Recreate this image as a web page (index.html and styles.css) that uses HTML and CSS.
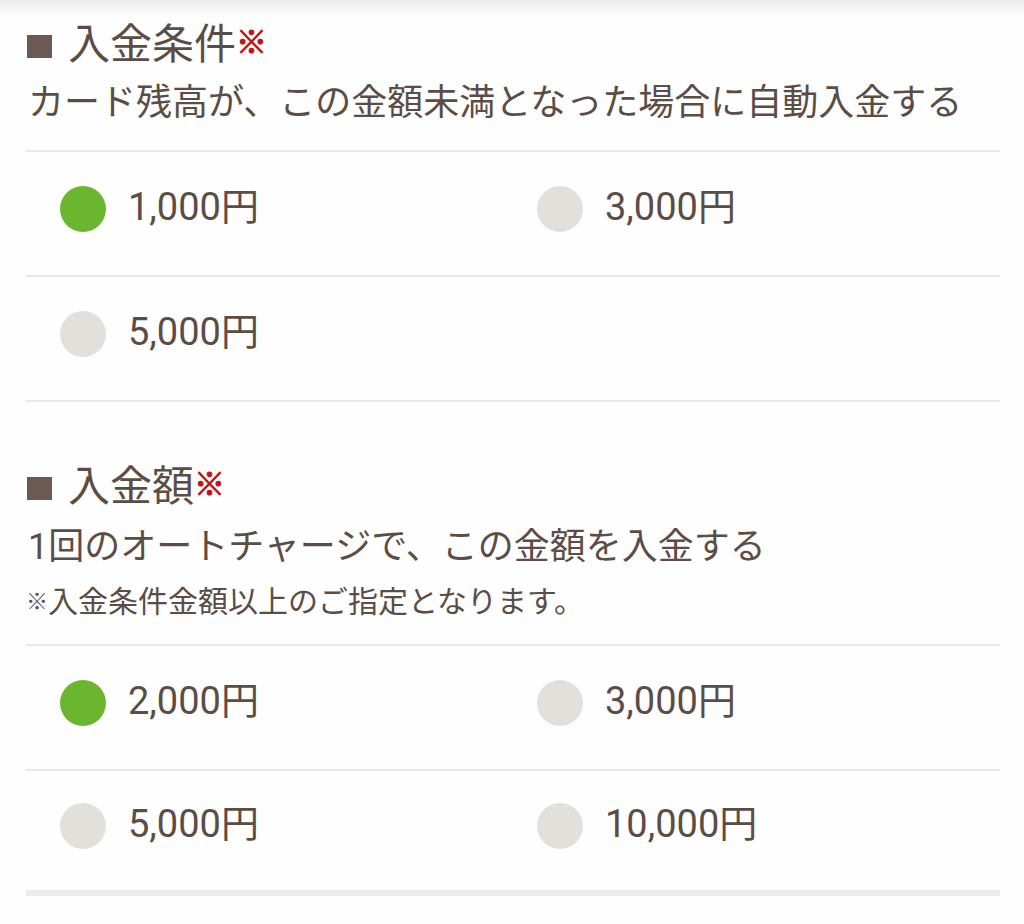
FILE: index.html
```html
<!DOCTYPE html>
<html lang="ja">
<head>
    <meta charset="UTF-8">
    <meta name="viewport" content="width=device-width, initial-scale=1.0">
    <title>オートチャージ設定</title>
    <link rel="stylesheet" href="styles.css">
</head>
<body>

    <div class="container">
        <section class="section first">
            <h2 class="title"><span class="mark"></span>入金条件<span class="req">※</span></h2>
            <p class="lead">カード残高が、この金額未満となった場合に自動入金する</p>

            <div class="options">
                <label class="option checked"><span class="dot"></span>1,000円</label>
                <label class="option"><span class="dot"></span>3,000円</label>
                <label class="option"><span class="dot"></span>5,000円</label>
                <span class="option empty"></span>
            </div>
        </section>

        <section class="section second">
            <h2 class="title"><span class="mark"></span>入金額<span class="req">※</span></h2>
            <p class="lead">1回のオートチャージで、この金額を入金する</p>
            <p class="note"><span class="note-mark">※</span>入金条件金額以上のご指定となります。</p>

            <div class="options last">
                <label class="option checked"><span class="dot"></span>2,000円</label>
                <label class="option"><span class="dot"></span>3,000円</label>
                <label class="option"><span class="dot"></span>5,000円</label>
                <label class="option"><span class="dot"></span>10,000円</label>
            </div>
        </section>
    </div>

</body>
</html>
```

FILE: styles.css
```css
* {
    margin: 0;
    padding: 0;
    box-sizing: border-box;
}
body {
    font-family: Roboto, "Noto Sans CJK JP", sans-serif;
    background: linear-gradient(#ececec, #fefefe 18px) no-repeat;
    background-color: #fefefe;
    color: #5b4d46;
    width: 1024px;
    height: 924px;
    overflow: hidden;
}
.container {
    padding: 0 24px 0 26px;
}
.section.first {
    padding-top: 17px;
}
.section.second {
    padding-top: 57px;
}
.title {
    display: flex;
    align-items: center;
    font-size: 42px;
    font-weight: 400;
    line-height: 56px;
    color: #5b4d46;
}
.mark {
    width: 25px;
    height: 23px;
    background-color: #6a5a51;
    margin: 2px 16px 0 1px;
}
.req {
    color: #c0121c;
    font-size: 31px;
    font-weight: 700;
    margin-left: 0;
    margin-top: -4px;
    -webkit-text-stroke: 1px #c0121c;
}
.lead {
    font-size: 36px;
    line-height: 48px;
    margin-top: 6px;
    padding-left: 2px;
}
.first .lead {
    margin-bottom: 23px;
}
.second .lead {
    margin-top: 8px;
}
.note {
    font-size: 30px;
    line-height: 40px;
    margin-top: 11px;
    margin-bottom: 22px;
}
.note-mark {
    font-size: 22px;
    vertical-align: 3px;
}
.options {
    display: grid;
    grid-template-columns: 1fr 1fr;
    border-top: 2px solid #ebe8e4;
}
.option {
    display: flex;
    align-items: center;
    gap: 22px;
    height: 125px;
    border-bottom: 2px solid #ebe8e4;
    font-size: 38px;
    line-height: 1;
    padding-left: 34px;
    padding-bottom: 14px;
    color: #5b4d46;
}
.option:nth-child(2n) {
    padding-left: 24px;
}
.options.last .option:nth-child(n+3) {
    border-bottom: 6px solid #ebebe7;
}
.dot {
    width: 46px;
    height: 46px;
    border-radius: 50%;
    background-color: #e3dfdb;
    flex-shrink: 0;
    margin-top: 4px;
}
.option.checked .dot {
    background-color: #6ab72f;
}
```
